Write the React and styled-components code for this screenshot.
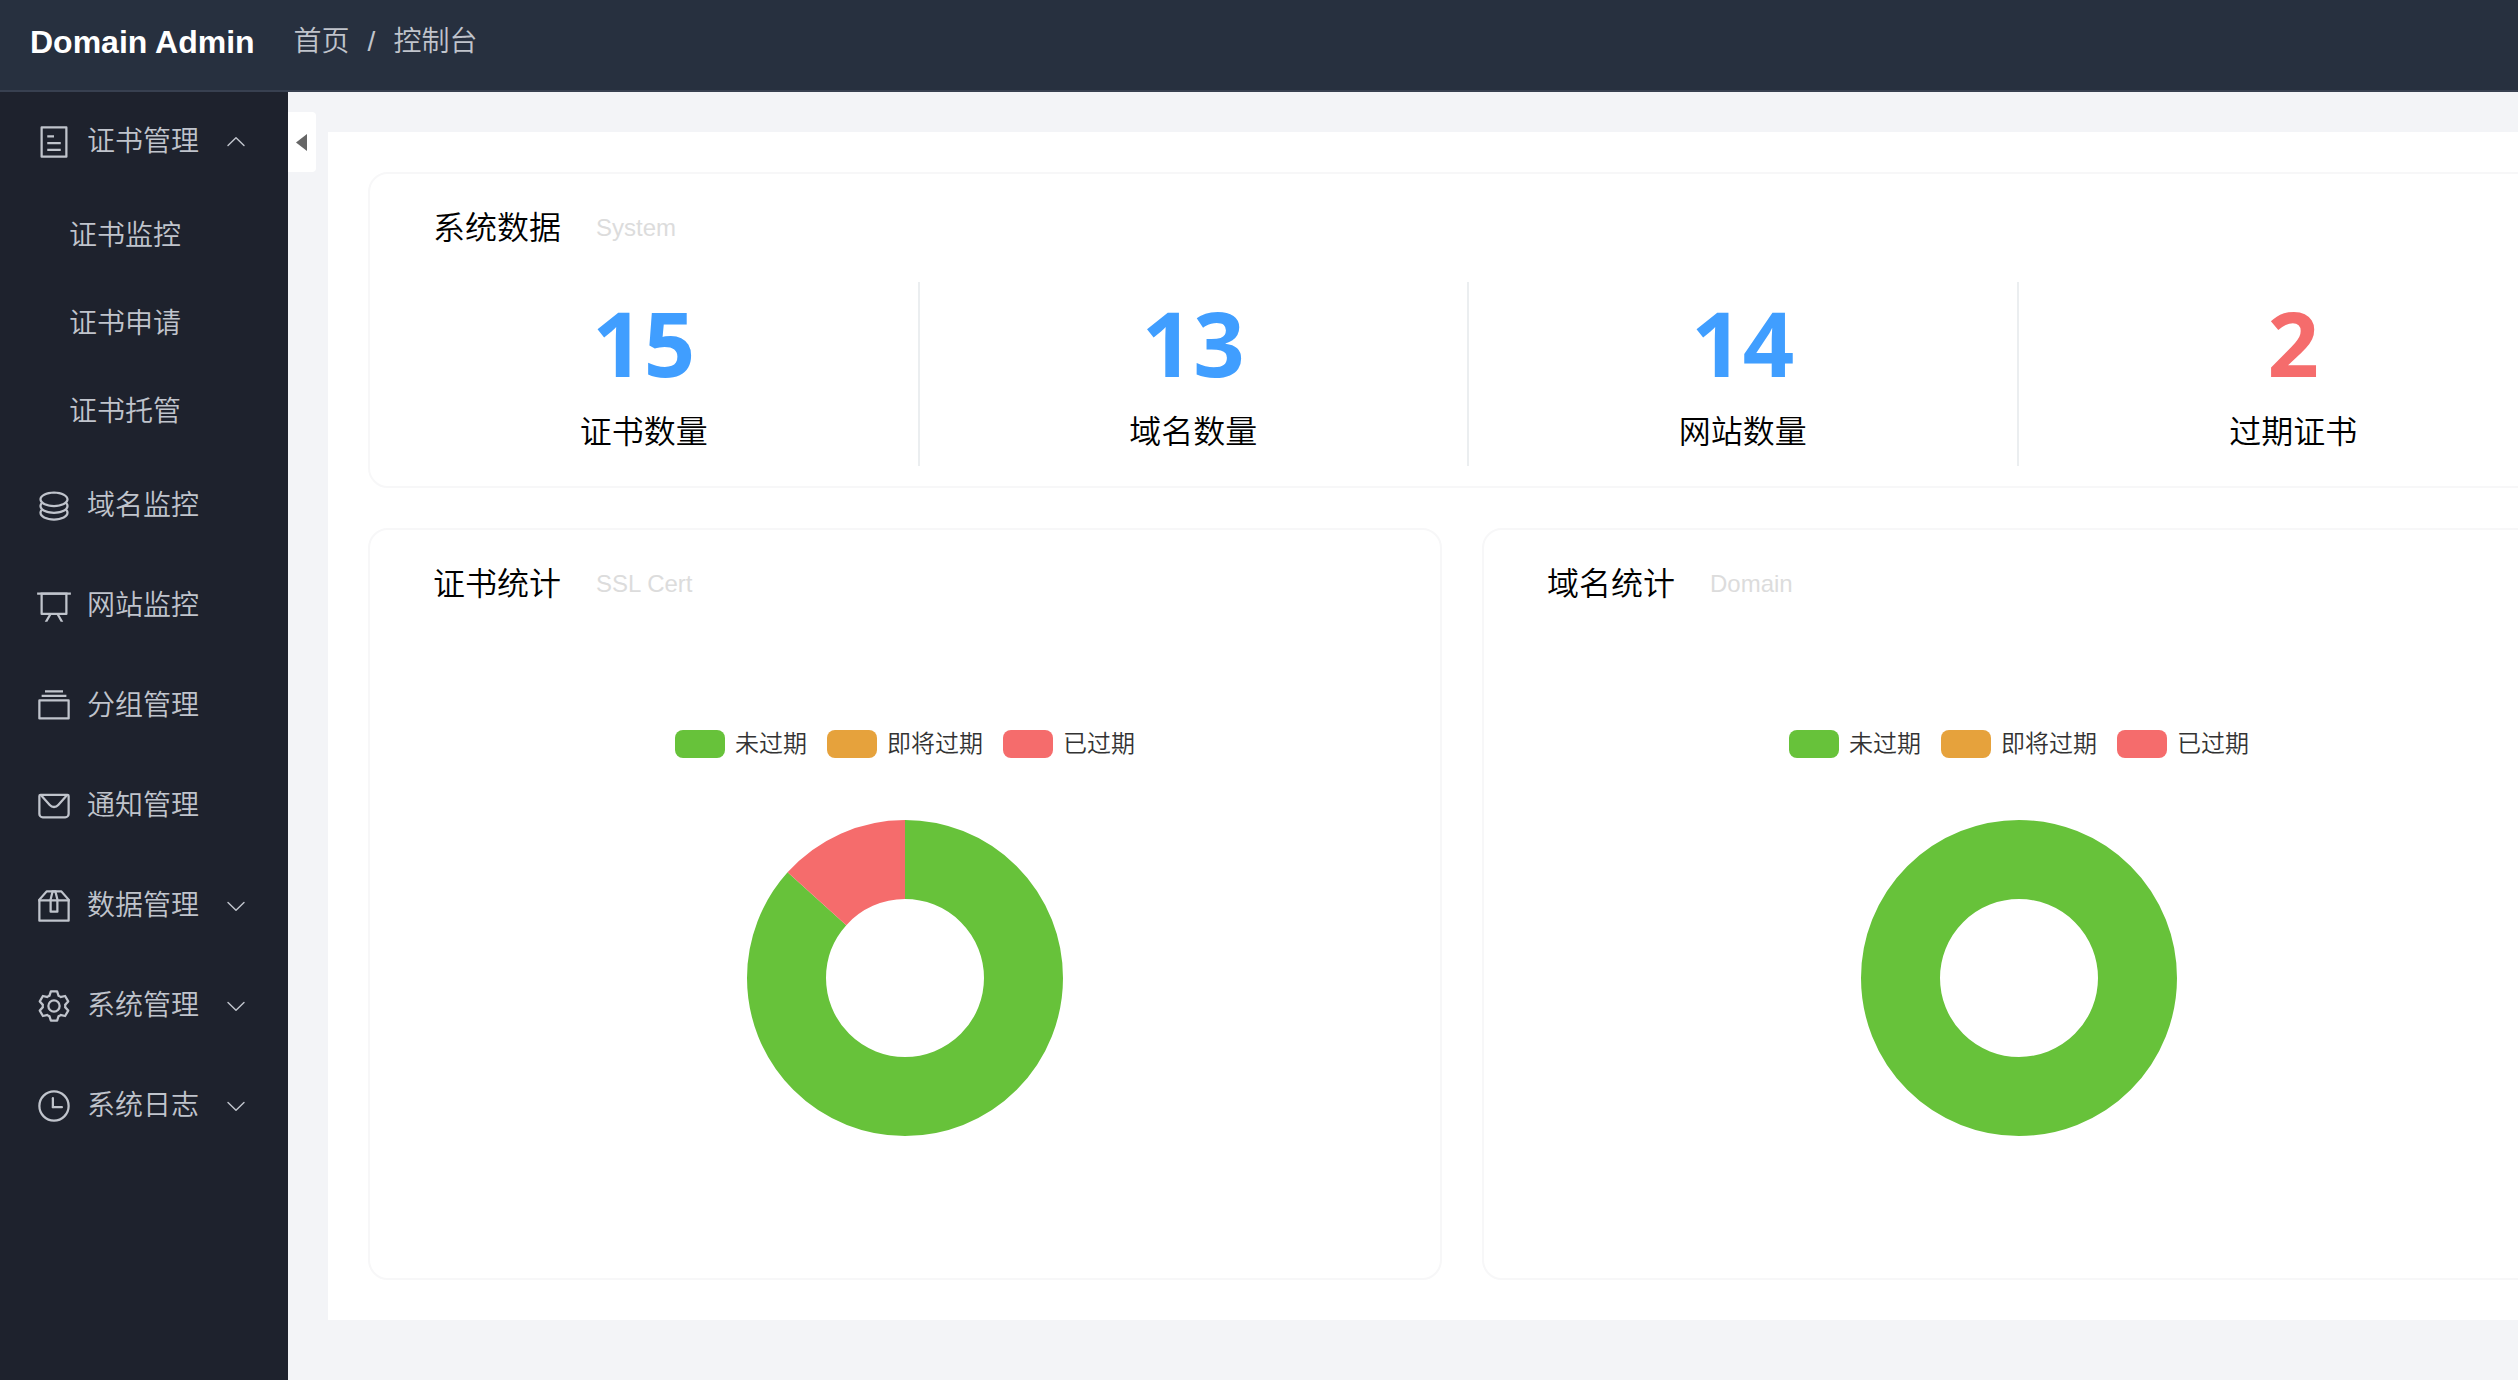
import React, { useState } from 'react';
import styled, { createGlobalStyle } from 'styled-components';

const GlobalStyle = createGlobalStyle`
    * {
        box-sizing: border-box;
    }
    body {
        margin: 0;
        background-color: #f3f4f7;
        color: #000;
        font-family: "Liberation Sans", "Noto Sans CJK SC", sans-serif;
        overflow-x: hidden;
    }
    button {
        font-family: inherit;
        border: 0;
        cursor: pointer;
    }
    a {
        color: inherit;
        text-decoration: none;
    }
`;

const Page = styled.div`
    display: flex;
    flex-direction: column;
    min-height: 100vh;
    overflow: hidden;
`;

const Header = styled.header`
    display: flex;
    align-items: center;
    height: 92px;
    padding: 0 30px 6px;
    background-color: #27303f;
    border-bottom: 2px solid #384050;
`;

const Logo = styled.a`
    margin-right: 39px;
    color: #fff;
    font-size: 32px;
    font-weight: 700;
    line-height: 40px;
`;

const Breadcrumb = styled.nav`
    display: flex;
    align-items: center;
    gap: 18px;
    color: #c0c4cc;
    font-size: 28px;
    font-weight: 350;
    line-height: 40px;
`;

const Body = styled.div`
    display: flex;
    flex: 1;
`;

const Sidebar = styled.nav`
    flex: none;
    width: 288px;
    background-color: #1e222d;
    color: #c0c4cc;
`;

const MenuItem = styled.a`
    display: flex;
    align-items: center;
    gap: 15px;
    width: 100%;
    height: 100px;
    padding: 0 36px;
    background: none;
    color: inherit;
    font-size: 28px;
    font-weight: 350;
    line-height: 40px;
    &:hover {
        background-color: #171a23;
    }
`;

const SubMenuItem = styled(MenuItem)`
    height: 88px;
    padding: 0 69px;
`;

const Icon = styled.svg`
    flex: none;
    width: 36px;
    height: 36px;
    fill: currentColor;
`;

const Arrow = styled.svg`
    flex: none;
    width: 24px;
    height: 24px;
    margin-left: 10px;
    fill: currentColor;
    transform: ${props => props.$open ? 'rotate(180deg)' : 'none'};
`;

const Main = styled.main`
    display: flex;
    align-items: flex-start;
    flex: 1;
    min-width: 0;
    padding-bottom: 60px;
`;

const CollapseButton = styled.button`
    display: flex;
    align-items: center;
    flex: none;
    width: 28px;
    height: 60px;
    margin-top: 20px;
    padding: 0 8px;
    background-color: #fff;
    border-radius: 0 4px 4px 0;
    svg {
        width: 11px;
        height: 17px;
        fill: #666;
    }
`;

const Panel = styled.div`
    flex: none;
    width: calc(100% + 52px);
    margin: 40px 0 0 12px;
    padding: 40px;
    background-color: #fff;
`;

const Card = styled.section`
    border: 2px solid #f7f7f8;
    border-radius: 20px;
`;

const CardHead = styled.div`
    display: flex;
    align-items: center;
    gap: 35px;
    height: 108px;
    padding: 0 63px;
    h2 {
        margin: 0;
        font-size: 32px;
        font-weight: 350;
        line-height: 48px;
    }
    span {
        color: #dcdcdc;
        font-size: 24px;
        line-height: 32px;
    }
`;

const Stats = styled.div`
    display: grid;
    grid-template-columns: repeat(4, 1fr);
    padding-bottom: 20px;
`;

const Stat = styled.div`
    display: flex;
    flex-direction: column;
    align-items: center;
    height: 184px;
    padding-top: 8px;
    border-right: 2px solid #ebeef0;
    &:last-child {
        border-right: 0;
    }
    strong {
        color: ${props => props.$color};
        font-family: "Noto Sans", "Open Sans", sans-serif;
        font-size: 90px;
        font-weight: 700;
        line-height: 104px;
    }
    span {
        margin-top: 14px;
        font-size: 32px;
        font-weight: 350;
        line-height: 48px;
    }
`;

const Charts = styled.div`
    display: grid;
    grid-template-columns: repeat(2, 1fr);
    gap: 40px;
    margin-top: 40px;
    padding-right: 14px;
`;

const Chart = styled.div`
    display: flex;
    flex-direction: column;
    align-items: center;
    padding: 88px 0 142px;
`;

const Legend = styled.ul`
    display: flex;
    gap: 20px;
    margin: 0 0 58px;
    padding: 0;
    list-style: none;
    color: #333;
    font-size: 24px;
    font-weight: 350;
    line-height: 36px;
    li {
        display: flex;
        align-items: center;
        gap: 10px;
    }
`;

const Swatch = styled.i`
    width: 50px;
    height: 28px;
    border-radius: 8px;
    background-color: ${props => props.$color};
`;

const Donut = styled.svg`
    width: 316px;
    height: 316px;
`;

const icons = {
    tickets: ['M192 128v768h640V128H192zm-32-64h704a32 32 0 0 1 32 32v832a32 32 0 0 1-32 32H160a32 32 0 0 1-32-32V96a32 32 0 0 1 32-32zm160 448h384v64H320v-64zm0-192h192v64H320v-64zm0 384h384v64H320v-64z'],
    coin: [
        'm161.92 580.736 29.888 58.88C171.328 659.776 160 681.728 160 704c0 82.304 155.328 160 352 160s352-77.696 352-160c0-22.272-11.392-44.16-31.808-64.32l30.464-58.432C903.936 615.808 928 657.664 928 704c0 129.728-188.544 224-416 224S96 833.728 96 704c0-46.592 24.32-88.576 65.92-123.264z',
        'm161.92 388.736 29.888 58.88C171.328 467.84 160 489.792 160 512c0 82.304 155.328 160 352 160s352-77.696 352-160c0-22.272-11.392-44.16-31.808-64.32l30.464-58.432C903.936 423.808 928 465.664 928 512c0 129.728-188.544 224-416 224S96 641.728 96 512c0-46.592 24.32-88.576 65.92-123.264z',
        'M512 544c-227.456 0-416-94.272-416-224S284.544 96 512 96s416 94.272 416 224-188.544 224-416 224zm0-64c196.672 0 352-77.696 352-160S708.672 160 512 160s-352 77.696-352 160 155.328 160 352 160z',
    ],
    board: [
        'M32 128h960v64H32z',
        'M192 192v512h640V192H192zm-64-64h768v608a32 32 0 0 1-32 32H160a32 32 0 0 1-32-32V128z',
        'M322.176 960H248.32l144.64-250.56 55.424 32L322.176 960zm453.888 0h-73.856L576 741.44l55.424-32L776.064 960z',
    ],
    files: ['M128 384v448h768V384H128zm-32-64h832a32 32 0 0 1 32 32v512a32 32 0 0 1-32 32H96a32 32 0 0 1-32-32V352a32 32 0 0 1 32-32zm64-128h704v64H160zm96-128h512v64H256z'],
    message: [
        'M128 224v512a64 64 0 0 0 64 64h640a64 64 0 0 0 64-64V224H128zm0-64h768a64 64 0 0 1 64 64v512a128 128 0 0 1-128 128H192A128 128 0 0 1 64 736V224a64 64 0 0 1 64-64z',
        'M904 224 656.512 506.88a192 192 0 0 1-289.024 0L120 224h784zm-698.944 0 210.56 240.704a128 128 0 0 0 192.704 0L818.944 224H205.056z',
    ],
    box: [
        'M317.056 128 128 344.064V896h768V344.064L706.944 128H317.056zm-14.528-64h418.944a32 32 0 0 1 24.064 10.88l206.528 236.096A32 32 0 0 1 960 332.032V928a32 32 0 0 1-32 32H96a32 32 0 0 1-32-32V332.032a32 32 0 0 1 7.936-21.12L278.4 75.008A32 32 0 0 1 302.528 64z',
        'M64 320h896v64H64z',
        'M448 327.872V640h128V327.872L526.08 128h-28.16L448 327.872zM448 64h128l64 256v352a32 32 0 0 1-32 32H416a32 32 0 0 1-32-32V320l64-256z',
    ],
    setting: ['M600.704 64a32 32 0 0 1 30.464 22.208l35.2 109.376c14.784 7.232 28.928 15.36 42.432 24.512l112.384-24.192a32 32 0 0 1 34.432 15.36L944.32 364.8a32 32 0 0 1-4.032 37.504l-77.12 85.12a357.12 357.12 0 0 1 0 49.024l77.12 85.248a32 32 0 0 1 4.032 37.504l-88.704 153.6a32 32 0 0 1-34.432 15.296L708.8 803.904c-13.44 9.088-27.648 17.28-42.368 24.512l-35.264 109.376A32 32 0 0 1 600.704 960H423.296a32 32 0 0 1-30.464-22.208L357.696 828.48a351.616 351.616 0 0 1-42.56-24.64l-112.32 24.256a32 32 0 0 1-34.432-15.36L79.68 659.2a32 32 0 0 1 4.032-37.504l77.12-85.248a357.12 357.12 0 0 1 0-48.896l-77.12-85.248A32 32 0 0 1 79.68 364.8l88.704-153.6a32 32 0 0 1 34.432-15.296l112.32 24.256c13.568-9.152 27.776-17.408 42.56-24.64l35.2-109.312A32 32 0 0 1 423.232 64H600.64zm-23.424 64H446.72l-36.352 113.088-24.512 11.968a294.113 294.113 0 0 0-34.816 20.096l-22.656 15.36-116.224-25.088-65.28 113.152 79.68 88.192-1.92 27.136a293.12 293.12 0 0 0 0 40.192l1.92 27.136-79.808 88.192 65.344 113.152 116.224-25.024 22.656 15.296a294.113 294.113 0 0 0 34.816 20.096l24.512 11.968L446.72 896h130.688l36.48-113.152 24.448-11.904a288.282 288.282 0 0 0 34.752-20.096l22.592-15.296 116.288 25.024 65.28-113.152-79.744-88.192 1.92-27.136a293.12 293.12 0 0 0 0-40.256l-1.92-27.136 79.808-88.128-65.344-113.152-116.288 24.96-22.592-15.232a287.616 287.616 0 0 0-34.752-20.096l-24.448-11.904L577.344 128zM512 320a192 192 0 1 1 0 384 192 192 0 0 1 0-384zm0 64a128 128 0 1 0 0 256 128 128 0 0 0 0-256z'],
    clock: [
        'M512 896a384 384 0 1 0 0-768 384 384 0 0 0 0 768zm0 64a448 448 0 1 1 0-896 448 448 0 0 1 0 896z',
        'M480 256a32 32 0 0 1 32 32v256a32 32 0 0 1-64 0V288a32 32 0 0 1 32-32z',
        'M480 512h256q32 0 32 32t-32 32H480q-32 0-32-32t32-32z',
    ],
};

const arrowPath = 'M831.872 340.864 512 652.672 192.128 340.864a30.592 30.592 0 0 0-42.752 0 29.12 29.12 0 0 0 0 41.6L489.664 714.24a32 32 0 0 0 44.672 0l340.288-331.712a29.12 29.12 0 0 0 0-41.728 30.592 30.592 0 0 0-42.752.064z';

const menus = [
    { icon: 'tickets', name: '证书管理', children: ['证书监控', '证书申请', '证书托管'] },
    { icon: 'coin', name: '域名监控' },
    { icon: 'board', name: '网站监控' },
    { icon: 'files', name: '分组管理' },
    { icon: 'message', name: '通知管理' },
    { icon: 'box', name: '数据管理', children: [] },
    { icon: 'setting', name: '系统管理', children: [] },
    { icon: 'clock', name: '系统日志', children: [] },
];

const stats = [
    { value: 15, label: '证书数量', color: '#409eff' },
    { value: 13, label: '域名数量', color: '#409eff' },
    { value: 14, label: '网站数量', color: '#409eff' },
    { value: 2, label: '过期证书', color: '#f56c6c' },
];

const certData = [
    { name: '未过期', value: 13, color: '#67c23a' },
    { name: '即将过期', value: 0, color: '#e6a23c' },
    { name: '已过期', value: 2, color: '#f56c6c' },
];

const domainData = [
    { name: '未过期', value: 13, color: '#67c23a' },
    { name: '即将过期', value: 0, color: '#e6a23c' },
    { name: '已过期', value: 0, color: '#f56c6c' },
];

function Menu({ icon, name, children }) {
    const [open, setOpen] = useState(Boolean(children && children.length));
    const toggle = children ? { as: 'button', type: 'button', 'aria-expanded': open, onClick: () => setOpen(!open) } : { href: '#' };

    return (
        <>
            <MenuItem {...toggle}>
                <Icon viewBox="0 0 1024 1024" aria-hidden="true">
                    {icons[icon].map(d => <path key={d} d={d} />)}
                </Icon>
                <span>{name}</span>
                {children && (
                    <Arrow $open={open} viewBox="0 0 1024 1024" aria-hidden="true">
                        <path d={arrowPath} />
                    </Arrow>
                )}
            </MenuItem>
            {open && children.map(child => <SubMenuItem key={child} href="#">{child}</SubMenuItem>)}
        </>
    )
}

function PieCard({ title, subtitle, data }) {
    const total = data.reduce((sum, item) => sum + item.value, 0);
    let start = 0;

    // every slice is a dash on the same ring, pathLength makes the ring total long
    const slices = data.filter(item => item.value > 0).map(item => {
        const slice = { ...item, start };
        start += item.value;
        return slice;
    });

    return (
        <Card>
            <CardHead>
                <h2>{title}</h2>
                <span>{subtitle}</span>
            </CardHead>
            <Chart>
                <Legend>
                    {data.map(item => (
                        <li key={item.name}><Swatch $color={item.color} />{item.name}</li>
                    ))}
                </Legend>
                <Donut viewBox="0 0 316 316" role="img" aria-label={title}>
                    <g transform="rotate(-90 158 158)" fill="none" strokeWidth="79">
                        {slices.map(item => (
                            <circle
                                key={item.name}
                                cx="158"
                                cy="158"
                                r="118.5"
                                stroke={item.color}
                                pathLength={total}
                                strokeDasharray={item.value === total ? 'none' : `${item.value} ${total - item.value}`}
                                strokeDashoffset={-item.start}
                            />
                        ))}
                    </g>
                </Donut>
            </Chart>
        </Card>
    )
}

function App() {
    return (
        <Page>
            <GlobalStyle />
            <Header>
                <Logo href="#">Domain Admin</Logo>
                <Breadcrumb>
                    <a href="#">首页</a>
                    <span>/</span>
                    <span>控制台</span>
                </Breadcrumb>
            </Header>
            <Body>
                <Sidebar>
                    {menus.map(menu => <Menu key={menu.name} {...menu} />)}
                </Sidebar>
                <Main>
                    <CollapseButton type="button" aria-label="收起菜单">
                        <svg viewBox="0 0 11 17"><path d="M11 0v17L0 8.5z" /></svg>
                    </CollapseButton>
                    <Panel>
                        <Card>
                            <CardHead>
                                <h2>系统数据</h2>
                                <span>System</span>
                            </CardHead>
                            <Stats>
                                {stats.map(stat => (
                                    <Stat key={stat.label} $color={stat.color}>
                                        <strong>{stat.value}</strong>
                                        <span>{stat.label}</span>
                                    </Stat>
                                ))}
                            </Stats>
                        </Card>
                        <Charts>
                            <PieCard title="证书统计" subtitle="SSL Cert" data={certData} />
                            <PieCard title="域名统计" subtitle="Domain" data={domainData} />
                        </Charts>
                    </Panel>
                </Main>
            </Body>
        </Page>
    )
}

export default App
